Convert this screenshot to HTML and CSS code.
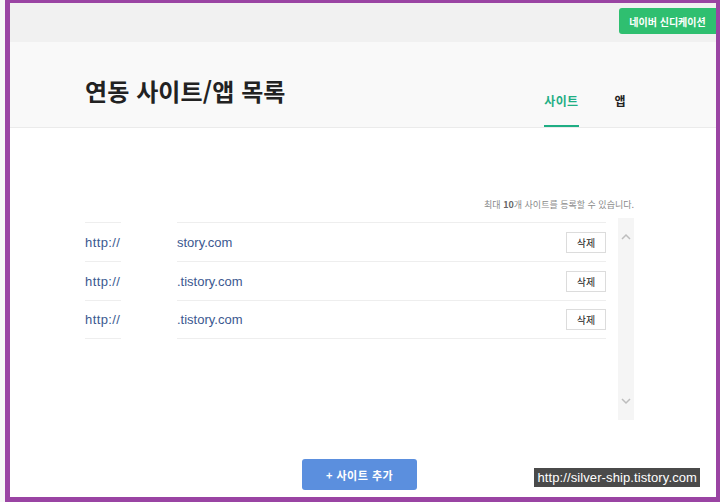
FILE: index.html
```html
<!DOCTYPE html>
<html lang="ko">
<head>
    <meta charset="UTF-8">
    <meta name="viewport" content="width=device-width, initial-scale=1.0">
    <title>연동 사이트/앱 목록</title>
    <link rel="stylesheet" href="styles.css">
</head>
<body>
    <div class="frame">
        <div class="topbar">
            <button class="syndi">네이버 신디케이션</button>
        </div>

        <div class="head">
            <div class="inner head-inner">
                <h1>연동 사이트/앱 목록</h1>
                <nav class="tabs">
                    <a class="tab on">사이트</a>
                    <a class="tab">앱</a>
                </nav>
            </div>
        </div>

        <div class="content">
            <div class="inner">
                <p class="note">최대 <b>10</b>개 사이트를 등록할 수 있습니다.</p>
                <div class="list-wrap">
                    <ul class="sites">
                        <li class="site">
                            <span class="proto">http://</span>
                            <span class="domain">
                                <span>story.com</span>
                                <button class="del">삭제</button>
                            </span>
                        </li>
                        <li class="site">
                            <span class="proto">http://</span>
                            <span class="domain">
                                <span>.tistory.com</span>
                                <button class="del">삭제</button>
                            </span>
                        </li>
                        <li class="site">
                            <span class="proto">http://</span>
                            <span class="domain">
                                <span>.tistory.com</span>
                                <button class="del">삭제</button>
                            </span>
                        </li>
                    </ul>
                    <div class="scroll">
                        <svg width="10" height="7" viewBox="0 0 10 7"><polyline points="1,6 5,2 9,6" fill="none" stroke="#bdbdbd" stroke-width="1.5"/></svg>
                        <svg width="10" height="7" viewBox="0 0 10 7"><polyline points="1,1 5,5 9,1" fill="none" stroke="#bdbdbd" stroke-width="1.5"/></svg>
                    </div>
                </div>
                <div class="actions">
                    <button class="add">+ 사이트 추가</button>
                </div>
            </div>
        </div>

        <div class="watermark">http://silver-ship.tistory.com</div>
    </div>
</body>
</html>
```

FILE: styles.css
```css
body {
    margin: 0;
    background-color: #f7f7f7;
    font-family: "Noto Sans CJK KR", "Noto Sans", sans-serif;
    color: #222;
}

.frame {
    position: relative;
    margin-left: 5px;
    height: 494px;
    border-style: solid;
    border-color: #9a44a3;
    border-width: 3px 4px 5px 5px;
    background-color: #fff;
    overflow: hidden;
}

.inner {
    width: 549px;
    margin-left: 75px;
}

.topbar {
    height: 39px;
    background-color: #f1f1f1;
    display: flex;
    justify-content: flex-end;
    align-items: flex-start;
}

.syndi {
    margin-top: 5px;
    width: 97px;
    height: 26px;
    border: none;
    border-radius: 3px 0 0 3px;
    background-color: #2fbf70;
    color: #fff;
    font-family: inherit;
    font-size: 10px;
    font-weight: bold;
    padding: 0;
}

.head {
    height: 85px;
    background-color: #f9f9f9;
    border-bottom: 1px solid #ebebeb;
}

.head-inner {
    height: 85px;
    display: flex;
    align-items: flex-end;
}

h1 {
    margin: 0 0 21px 0;
    font-size: 24px;
    line-height: 30px;
    font-weight: bold;
    letter-spacing: 0.1px;
    color: #222;
}

.tabs {
    margin-left: auto;
    display: flex;
    gap: 36px;
    padding-right: 8px;
}

.tab {
    font-size: 12px;
    font-weight: bold;
    line-height: 16px;
    letter-spacing: 0.4px;
    padding-bottom: 16px;
    border-bottom: 2px solid transparent;
    color: #222;
}

.tab.on {
    color: #1fae84;
    border-bottom-color: #1fae84;
}

.content {
    padding-top: 71px;
}

.note {
    margin: 0;
    text-align: right;
    font-size: 9px;
    line-height: 12px;
    color: #8a8a8a;
}

.note b {
    color: #666;
}

.list-wrap {
    margin-top: 7px;
    display: flex;
    gap: 12px;
    height: 202px;
}

.sites {
    list-style: none;
    margin: 4px 0 0 0;
    padding: 0;
    width: 521px;
}

.site {
    display: flex;
    height: 39px;
    font-family: "Liberation Sans", Arial, sans-serif;
    font-size: 13px;
    color: #3b5890;
}

.site:last-child .proto,
.site:last-child .domain {
    border-bottom: 1px solid #eee;
}

.proto {
    width: 36px;
    border-top: 1px solid #eee;
    display: flex;
    align-items: center;
    letter-spacing: 0.4px;
}

.domain {
    margin-left: 56px;
    flex: 1;
    border-top: 1px solid #eee;
    display: flex;
    align-items: center;
    justify-content: space-between;
}

.del {
    width: 40px;
    height: 21px;
    padding: 0;
    border: 1px solid #dcdcdc;
    background-color: #fff;
    font-family: "Noto Sans CJK KR", sans-serif;
    font-size: 10px;
    color: #222;
}

.scroll {
    width: 16px;
    background-color: #f5f5f5;
    display: flex;
    flex-direction: column;
    justify-content: space-between;
    align-items: center;
    padding: 15px 0 15px 0;
    box-sizing: border-box;
}

.actions {
    margin-top: 39px;
    text-align: center;
}

.add {
    width: 115px;
    height: 31px;
    border: none;
    border-radius: 3px;
    background-color: #5b8fde;
    color: #fff;
    font-family: inherit;
    font-size: 11px;
    font-weight: bold;
    letter-spacing: 0.5px;
}

.watermark {
    position: absolute;
    right: 16px;
    bottom: 10px;
    height: 19px;
    padding: 0 3px;
    background-color: #4a4a4a;
    color: #fff;
    font-family: "Liberation Sans", Arial, sans-serif;
    font-size: 13px;
    line-height: 19px;
    letter-spacing: 0.1px;
}
```
